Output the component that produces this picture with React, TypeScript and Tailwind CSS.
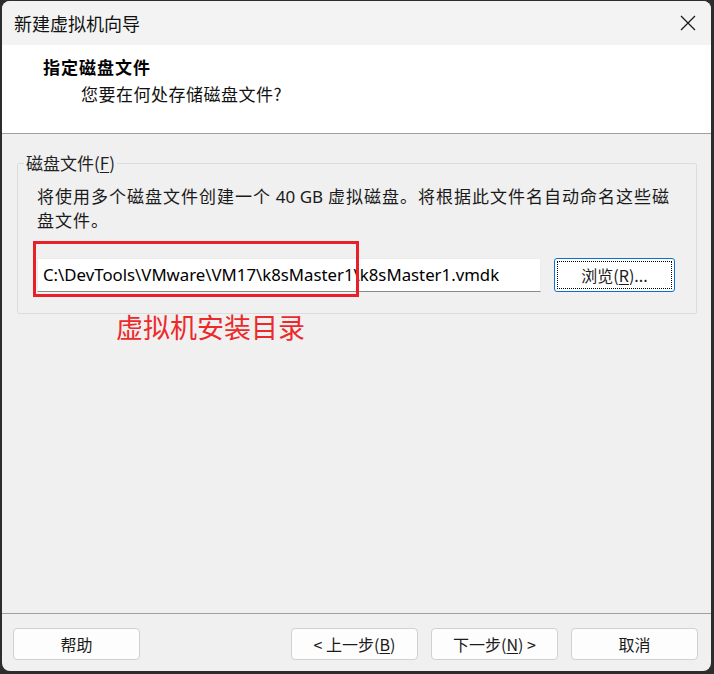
import React from "react";

const cjk = { fontFamily: '"Noto Sans CJK SC", "Noto Sans", sans-serif' };
const latin = { fontFamily: '"Noto Sans", "Noto Sans CJK SC", sans-serif' };

function Btn({ children, className = "" }: { children: React.ReactNode; className?: string }) {
  return (
    <div
      className={
        "flex h-[32px] w-[127px] items-center justify-center rounded-[4px] border border-[#d0d0d0] bg-[#fdfdfd] text-[16px] text-[#1b1b1b] " +
        className
      }
      style={cjk}
    >
      {children}
    </div>
  );
}

export default function App() {
  return (
    <div className="h-[674px] w-[714px] bg-[#2d2d2d] pb-[3px] pl-[2px] pr-[3px] pt-px">
      <div className="flex h-full flex-col overflow-hidden rounded-[8px] bg-[#f0f0f0]">
        {/* title bar */}
        <div className="flex h-[44px] shrink-0 items-center justify-between bg-[#f3f3f3] pl-[12px]">
          <span className="text-[18px] leading-none text-[#111]" style={cjk}>
            新建虚拟机向导
          </span>
          <div className="flex h-[44px] w-[46px] items-center justify-center">
            <svg width="16" height="16" viewBox="0 0 16 16">
              <path d="M1 1 L15 15 M15 1 L1 15" stroke="#1a1a1a" strokeWidth="1.3" fill="none" />
            </svg>
          </div>
        </div>

        {/* header */}
        <div className="h-[89px] shrink-0 border-b border-[#a0a0a0] bg-white pl-[41px] pt-[10px]" style={cjk}>
          <div className="text-[17px] font-bold leading-[24px] tracking-[1px] text-black">指定磁盘文件</div>
          <div className="mt-[3px] pl-[38px] text-[17px] leading-[24px] tracking-[0.5px] text-[#111]">
            您要在何处存储磁盘文件?
          </div>
        </div>

        {/* body */}
        <div className="relative flex-1 pl-[15px] pr-[14px] pt-[17px]">
          <fieldset className="rounded-[2px] border border-[#dcdcdc] px-0">
            <legend className="ml-[6px] px-[2px] text-[17px] leading-[24px] text-[#222]" style={cjk}>
              磁盘文件(<span className="underline underline-offset-2">F</span>)
            </legend>
            <div className="pb-[21px] pl-[19px] pr-[21px]">
              <div className="mt-[9px] text-[17px] leading-[23px] tracking-[1px] text-[#1a1a1a]" style={cjk}>
                将使用多个磁盘文件创建一个 <span style={latin} className="tracking-normal">40 GB</span> 虚拟磁盘。将根据此文件名自动命名这些磁盘文件。
              </div>
              <div className="mt-[27px] flex items-center gap-[13px]">
                <div className="relative h-[34px] flex-1">
                  <div className="flex h-full items-center border border-[#ededed] border-b-[#8a8a8a] bg-white pl-[5px] text-[16.8px] text-black" style={latin}>
                    C:\DevTools\VMware\VM17\k8sMaster1\k8sMaster1.vmdk
                  </div>
                  <div className="pointer-events-none absolute left-[-4px] top-[-17px] h-[56px] w-[326px] border-[3px] border-[#e8202a]" />
                </div>
                <div className="relative flex h-[34px] w-[121px] items-center justify-center rounded-[3px] border border-[#0a70d0] bg-white text-[16px] text-[#1b1b1b]" style={cjk}>
                  <div className="pointer-events-none absolute inset-[2px] border border-dotted border-black" />
                  浏览(<span className="underline underline-offset-2">R</span>)...
                </div>
              </div>
            </div>
          </fieldset>
          <div className="absolute left-[114px] top-[177px] text-[27px] leading-[32px] text-[#ec2a2a]" style={cjk}>
            虚拟机安装目录
          </div>
        </div>

        {/* footer */}
        <div className="flex h-[58px] shrink-0 items-start border-t border-[#a0a0a0] pl-[11px] pt-[14px]">
          <Btn>帮助</Btn>
          <div className="ml-auto mr-[13px] flex gap-[13px]">
            <Btn>
              &lt; 上一步(<span className="underline underline-offset-2">B</span>)
            </Btn>
            <Btn>
              下一步(<span className="underline underline-offset-2">N</span>) &gt;
            </Btn>
            <Btn>取消</Btn>
          </div>
        </div>
      </div>
    </div>
  );
}
